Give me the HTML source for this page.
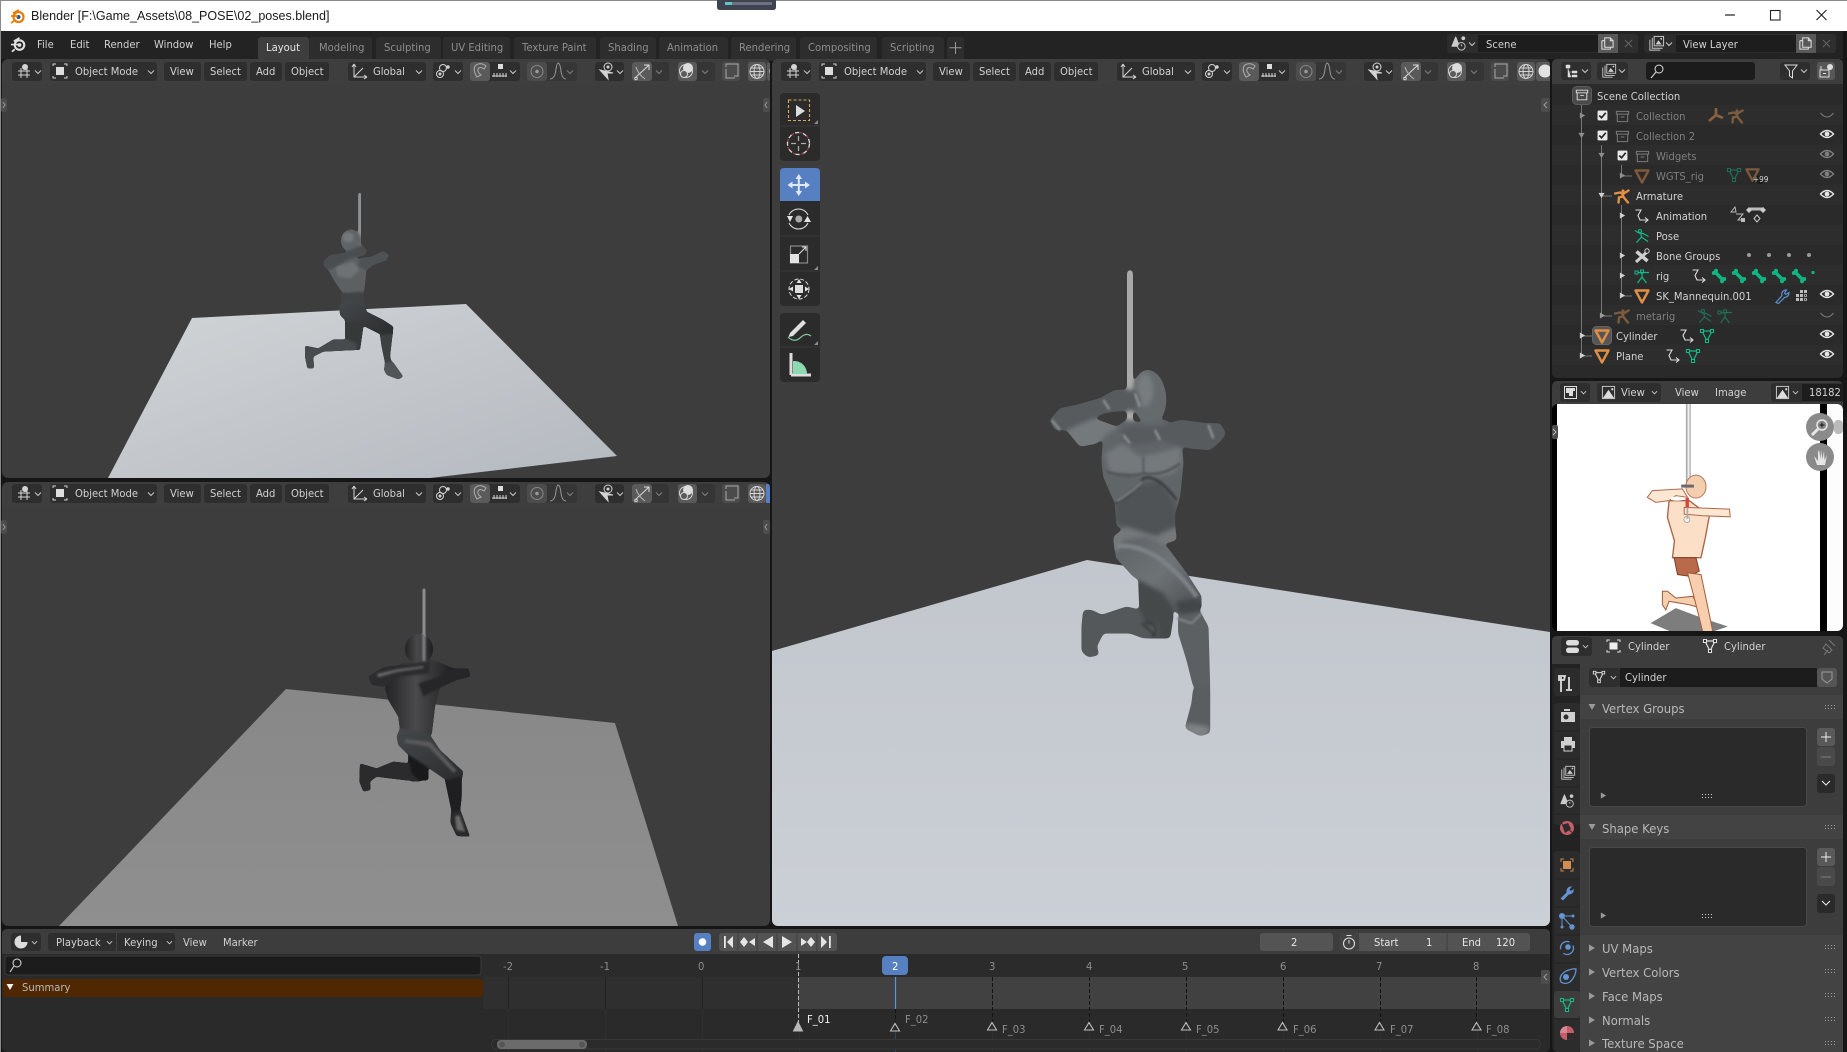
<!DOCTYPE html>
<html><head><meta charset="utf-8"><title>Blender</title>
<style>
html,body{margin:0;padding:0;width:1847px;height:1052px;overflow:hidden;background:#161616}
svg.p{position:absolute;left:0;top:0}
.t{position:absolute;white-space:nowrap;margin-top:1px;font:11px/14px "DejaVu Sans","Liberation Sans",sans-serif;color:#d2d2d2;transform:scaleX(.91);transform-origin:0 50%}
.d{color:#7f7f7f}.n{color:#8e8e8e}.w{color:#e6e6e6}.o{color:#b9b9b9}
.h{font-size:12px;transform:scaleX(.97)}
</style></head><body>
<svg class="p" width="1847" height="1052" viewBox="0 0 1847 1052">
<defs>
<linearGradient id="pl1" x1="0" y1="0" x2="1" y2="1"><stop offset="0" stop-color="#d2d5d7"/><stop offset="1" stop-color="#b4b9c0"/></linearGradient>
<linearGradient id="pl2" x1="0" y1="0" x2="0" y2="1"><stop offset="0" stop-color="#888"/><stop offset="1" stop-color="#8f8f8f"/></linearGradient>
<linearGradient id="pl3" x1="0" y1="0" x2="0" y2="1"><stop offset="0" stop-color="#c2c6cd"/><stop offset="1" stop-color="#cbcfd6"/></linearGradient>
<linearGradient id="g1" x1="0" y1="0" x2="1" y2="1"><stop offset="0" stop-color="#6d7275"/><stop offset="1" stop-color="#45484a"/></linearGradient>
<linearGradient id="g2" x1="0" y1="0" x2="1" y2="1"><stop offset="0" stop-color="#505456"/><stop offset="1" stop-color="#6a6e70"/></linearGradient>
<linearGradient id="g3" x1="0" y1="0" x2="1" y2="1"><stop offset="0" stop-color="#45484a"/><stop offset="1" stop-color="#2a2c2e"/></linearGradient>
<linearGradient id="g4" x1="0" y1="0" x2="1" y2="0"><stop offset="0" stop-color="#232325"/><stop offset=".45" stop-color="#4a4a4c"/><stop offset="1" stop-color="#1e1e20"/></linearGradient>
<linearGradient id="th" x1="0" y1="0" x2="1" y2="1"><stop offset="0" stop-color="#5d6265"/><stop offset=".5" stop-color="#6e7376"/><stop offset="1" stop-color="#494c4e"/></linearGradient>
<filter id="b1" x="-5%" y="-5%" width="110%" height="110%"><feGaussianBlur stdDeviation="3"/></filter>
<filter id="b3" x="-5%" y="-5%" width="110%" height="110%"><feGaussianBlur stdDeviation=".5"/></filter>
<filter id="goo1" x="-5%" y="-5%" width="110%" height="110%" color-interpolation-filters="sRGB"><feGaussianBlur stdDeviation="6"/><feComponentTransfer><feFuncA type="linear" slope="12" intercept="-5"/></feComponentTransfer><feGaussianBlur stdDeviation="1"/></filter>
<filter id="goo2" x="-5%" y="-5%" width="110%" height="110%" color-interpolation-filters="sRGB"><feGaussianBlur stdDeviation="2.800"/><feComponentTransfer><feFuncA type="linear" slope="12" intercept="-5"/></feComponentTransfer><feGaussianBlur stdDeviation=".8"/></filter>
<clipPath id="c1"><rect x="2" y="59" width="768" height="419" rx="6"/></clipPath>
<clipPath id="c2"><rect x="2" y="482" width="768" height="444" rx="6"/></clipPath>
<clipPath id="c3"><rect x="772" y="59" width="778" height="867" rx="6"/></clipPath>
<clipPath id="c4"><rect x="1552" y="404" width="291" height="227" rx="6"/></clipPath>

<symbol id="mesh" viewBox="0 0 16 16"><path d="M1.500 2.500H14.500L8 14.500Z" fill="none" stroke="currentColor" stroke-width="2.400" stroke-linejoin="round"/></symbol>
<symbol id="tri" viewBox="0 0 16 16"><path d="M3 3H13L8 13Z" fill="none" stroke="currentColor" stroke-width="1.200"/><path d="M1.500 1.500h3v3h-3zM11.500 1.500h3v3h-3zM6.500 11.500h3v3h-3z" fill="#222" stroke="currentColor" stroke-width="1.100"/></symbol>
<symbol id="arm" viewBox="0 0 16 16"><circle cx="9" cy="3" r="1.600" fill="currentColor"/><path d="M1 5.500 6 4.500 9 6 14.500 2.500M8.500 6 9.500 9 14 14.500M8.800 8.500 5 9.500 4.500 14.500" fill="none" stroke="currentColor" stroke-width="2.400" stroke-linecap="round"/></symbol>
<symbol id="pose" viewBox="0 0 16 16"><circle cx="6" cy="3" r="1.500" fill="none" stroke="currentColor"/><path d="M1 2.500 5 5 9 5.500 14.500 8.500M7 6 7.500 9 2.500 14.500M7.500 9 14 13.500" fill="none" stroke="currentColor" stroke-width="1.200"/></symbol>
<symbol id="rig" viewBox="0 0 16 16"><path d="M1 3h3v3H1zM6.500 2h3v3h-3z" fill="none" stroke="currentColor"/><path d="M4 4.500H15M8 5V9L3.500 15M8 9 12.500 15" fill="none" stroke="currentColor" stroke-width="1.200"/></symbol>
<symbol id="coll" viewBox="0 0 16 16"><path d="M1.500 2.500h13v3h-13zM2.500 5.500v8h11v-8M6 8.500h4" fill="none" stroke="currentColor" stroke-width="1.100"/></symbol>
<symbol id="eye" viewBox="0 0 16 16"><path d="M1.500 8Q8 1 14.500 8 8 15 1.500 8Z" fill="none" stroke="currentColor" stroke-width="1.400"/><circle cx="8" cy="8" r="2.400" fill="currentColor"/></symbol>
<symbol id="eoff" viewBox="0 0 16 16"><path d="M1.500 6Q8 14 14.500 6" fill="none" stroke="currentColor" stroke-width="1"/></symbol>
<symbol id="chk" viewBox="0 0 12 12"><rect x=".5" y=".5" width="11" height="11" rx="1.500" fill="#e8e8e8" stroke="#666" stroke-width=".6"/><path d="M2.500 6 5 8.500 9.500 3" fill="none" stroke="#222" stroke-width="1.800"/></symbol>
<symbol id="anim" viewBox="0 0 16 16"><path d="M1.500 2H7L4 7.500 6 12H14M11 9.500 14 12 11 14.500" fill="none" stroke="currentColor" stroke-width="1.100"/></symbol>
<symbol id="bone" viewBox="0 0 16 16"><path d="M3.500 3.500 12.500 12.500" stroke="currentColor" stroke-width="3.400"/><circle cx="2.800" cy="5" r="2" fill="currentColor"/><circle cx="5" cy="2.800" r="2" fill="currentColor"/><circle cx="11" cy="13.200" r="2" fill="currentColor"/><circle cx="13.200" cy="11" r="2" fill="currentColor"/></symbol>
<symbol id="bones" viewBox="0 0 16 16"><path d="M2 14 14 3" stroke="currentColor" stroke-width="3"/><path d="M2.500 3.500 13.500 13" stroke="currentColor" stroke-width="3.500"/><circle cx="13" cy="3" r="2.200" fill="#2a2a2a" stroke="currentColor"/></symbol>
<symbol id="wrench" viewBox="0 0 16 16"><path d="M2 14.500 8 7.500Q7 3.500 11 2L12.500 2 10.500 5 12 6.500 15 4.500Q15 9 10.500 9.500L4.500 15.500Z" fill="none" stroke="currentColor" stroke-width="1.200"/></symbol>
<symbol id="wrenchf" viewBox="0 0 16 16"><path d="M1.500 13.500 7.500 7.500Q7 3 11 1.500L13 1.500 10.500 4.500 11.800 6 14.800 4Q15 9 9.500 9.800L4 15.500Z" fill="currentColor"/></symbol>
<symbol id="grid" viewBox="0 0 14 14"><path d="M5 1h3v3H5zM9 1h3v3H9zM1 5h3v3H1zM5 5h3v3H5zM1 9h3v3H1zM5 9h3v3H5z" fill="#bbb"/><path d="M9.500 5.500h2v2h-2zM9.500 9.500h2v2h-2z" fill="none" stroke="#bbb" stroke-width=".8"/></symbol>
<symbol id="chev" viewBox="0 0 8 8"><path d="M1 2.500 4 5.500 7 2.500" fill="none" stroke="currentColor" stroke-width="1.100"/></symbol>
<symbol id="scene" viewBox="0 0 18 18"><path d="M5 2 9 12H1Z" fill="#ccc" stroke="#ccc" stroke-linejoin="round"/><circle cx="13" cy="3.500" r="2" fill="#ccc"/><circle cx="11" cy="12" r="4" fill="#2c2c2c" stroke="#ccc"/><path d="M11 12V10" stroke="#ccc"/></symbol>
<symbol id="layer" viewBox="0 0 18 18"><path d="M2 5V16H13M4.500 3V14H15.500" fill="none" stroke="#ccc"/><rect x="6.500" y="1.500" width="10" height="10" fill="#2c2c2c" stroke="#ccc"/><path d="M8 10 11 5.500 14.500 10Z" fill="#ccc"/><circle cx="14" cy="4" r="1" fill="#ccc"/></symbol>
<symbol id="copy" viewBox="0 0 16 16"><path d="M5 2h6l3 3v7H5zM2 5h3M2 5v9h9v-2M11 2v3h3" fill="none" stroke="#ddd" stroke-width="1.100"/></symbol>
<symbol id="x" viewBox="0 0 10 10"><path d="M1 1 9 9M9 1 1 9" stroke="currentColor" stroke-width="1"/></symbol>
<symbol id="img" viewBox="0 0 16 16"><rect x="1.500" y="1.500" width="13" height="13" fill="none" stroke="#ccc"/><path d="M2 14 8 5 14 14Z" fill="#ddd"/><circle cx="12" cy="4.500" r="1.200" fill="#ddd"/></symbol>
<symbol id="hdr" viewBox="0 0 800 26">
<rect x="0" y="0" width="800" height="26" fill="#3e3e3e"/>
<g fill="#2e2e2e">
<rect x="12" y="3" width="30" height="19" rx="3"/><rect x="50" y="3" width="107" height="19" rx="3"/>
<rect x="164" y="3" width="37" height="19" rx="3"/><rect x="204" y="3" width="43" height="19" rx="3"/><rect x="250" y="3" width="32" height="19" rx="3"/><rect x="285" y="3" width="44" height="19" rx="3"/>
<rect x="348" y="3" width="78" height="19" rx="3"/><rect x="433" y="3" width="30" height="19" rx="3"/><rect x="470" y="3" width="50" height="19" rx="3"/>
<rect x="595" y="3" width="29" height="19" rx="3"/></g>
<rect x="527" y="3" width="50" height="19" rx="3" fill="#363636"/>
<rect x="632" y="3" width="37" height="19" rx="3" fill="#353535"/>
<rect x="678" y="3" width="37" height="19" rx="3" fill="#353535"/>
<rect x="470" y="3" width="20" height="19" rx="3" fill="#5a5a5a"/>
<rect x="527" y="3" width="20" height="19" rx="3" fill="#4c4c4c"/>
<rect x="632" y="3" width="20" height="19" rx="3" fill="#5a5a5a"/>
<rect x="678" y="3" width="19" height="19" rx="3" fill="#5a5a5a"/>
<rect x="722" y="3" width="18" height="19" rx="3" fill="#4b4b4b"/>
<rect x="748" y="3" width="18" height="19" rx="3" fill="#5a5a5a"/><rect x="767" y="3" width="33" height="19" rx="3" fill="#5a5a5a"/>
<circle cx="776" cy="12" r="6.500" fill="#e2e2e2"/>
<g fill="none" stroke="#d4d4d4" stroke-width="1">
<path d="M18 12H30M18 16H30M21 9V19M27 9V19"/><circle cx="25" cy="8" r="3" fill="#d4d4d4" stroke="none"/>
<path d="M53 7V5h3M64 5h3V7M53 17v2h3M64 19h3v-2"/><rect x="56" y="8" width="8" height="8" fill="#ddd" stroke="none"/>
<path d="M354 5V18H367M354 5l-2 3M354 5l2 3M367 18l-3-2M367 18l-3 2M354 18 363 9"/>
<circle cx="443" cy="9" r="3.500"/><circle cx="440" cy="15" r="3.500"/><circle cx="448" cy="8" r="1.200" fill="#d4d4d4"/><circle cx="440" cy="15" r="1" fill="#d4d4d4"/>
<path d="M477 18Q472 10 476 6 481 3 486 7L484 10Q480 7 478 10 477 13 481 16Z" stroke="#a8a8a8" stroke-width="1.100"/>
<path d="M492 17H507M494 14V18M497 14V18M500 14V18M503 14V18M506 14V18"/><rect x="498" y="5" width="5" height="5" fill="#ddd" stroke="none"/>
<circle cx="537" cy="12.500" r="6" stroke="#888"/><circle cx="537" cy="12.500" r="1.800" fill="#999" stroke="none"/>
<path d="M550 20Q555 20 556 10 557 4 558 4 560 4 561 12 562 20 566 20" stroke="#999"/>
<path d="M600 11 608 20 607 14 613 14Z" fill="#d4d4d4"/><circle cx="608" cy="8" r="4" fill="#2e2e2e"/><circle cx="608" cy="8" r="1.500" fill="#d4d4d4" stroke="none"/>
<path d="M635 19 649 6M644 6h5v5" stroke="#ddd"/><path d="M636 8Q638 15 645 20" stroke="#bbb"/><circle cx="636" cy="19.500" r="1.300"/>
<circle cx="686" cy="12" r="6.500"/><circle cx="688" cy="9" r="5" fill="#ddd" stroke="none"/><circle cx="684" cy="15" r="3.500" fill="#5a5a5a"/>
<path d="M726 8V5H738V17H734M726 10v9H735" stroke="#aaa"/>
<circle cx="757" cy="12.500" r="7"/><ellipse cx="757" cy="12.500" rx="3" ry="7"/><path d="M750 12.500H764M751 9H763M751 16H763"/>
</g>
<g color="#c4c4c4"><use href="#chev" x="34" y="9" width="8" height="8"/><use href="#chev" x="147" y="9" width="8" height="8"/><use href="#chev" x="415" y="9" width="8" height="8"/><use href="#chev" x="454" y="9" width="8" height="8"/><use href="#chev" x="509" y="9" width="8" height="8"/><use href="#chev" x="616" y="9" width="8" height="8"/></g>
<g color="#7d7d7d"><use href="#chev" x="566" y="9" width="8" height="8"/><use href="#chev" x="655" y="9" width="8" height="8"/><use href="#chev" x="701" y="9" width="8" height="8"/></g>
</symbol>
<symbol id="tr" viewBox="0 0 8 8"><path d="M1 .5 7 4 1 7.500Z" fill="currentColor"/></symbol>
<symbol id="trd" viewBox="0 0 8 8"><path d="M.5 1H7.500L4 7Z" fill="currentColor"/></symbol>
<symbol id="gripd" viewBox="0 0 10 6"><path d="M0 0h1v1H0zM3 0h1v1H3zM6 0h1v1H6zM9 0h1v1H9zM0 3h1v1H0zM3 3h1v1H3zM6 3h1v1H6zM9 3h1v1H9z" fill="currentColor"/></symbol>
</defs>

<!-- title bar -->
<rect x="0" y="0" width="1847" height="31" fill="#fff"/><rect x="0" y="0" width="1847" height="1" fill="#8a8a8a"/>
<rect x="0" y="0" width="1" height="1052" fill="#8a8a8a"/>
<path d="M717 0H776V7Q776 10 773 10H720Q717 10 717 7Z" fill="#3f4350"/>
<rect x="725" y="2" width="7" height="3" fill="#5ec7c0"/><rect x="732" y="2" width="40" height="3" fill="#6d7280"/>
<g transform="translate(11 9)"><circle cx="7.500" cy="8" r="5" fill="none" stroke="#e87d0d" stroke-width="2.200"/><circle cx="7.500" cy="8" r="2" fill="#26558e"/><path d="M0 7H7M2 4 8 1M3 12 0 14" stroke="#e87d0d" stroke-width="1.700"/></g>
<path d="M1725 15H1735" stroke="#222" stroke-width="1.200"/><rect x="1770.500" y="10.500" width="9.500" height="9.500" fill="none" stroke="#222" stroke-width="1.100"/><path d="M1816.500 10 1826.500 20M1826.500 10 1816.500 20" stroke="#222" stroke-width="1.100"/>

<!-- top bar -->
<rect x="1" y="31" width="1846" height="28" fill="#232323"/>
<g transform="translate(10 36) scale(.95)"><circle cx="10" cy="9.500" r="5" fill="none" stroke="#e0e0e0" stroke-width="2.200"/><circle cx="10" cy="9.500" r="2" fill="#e0e0e0"/><path d="M1 9H9M4 5.500 10 2M5 14 2 16.500" stroke="#e0e0e0" stroke-width="1.800"/></g>
<g fill="#2d2d2d"><rect x="309" y="37" width="63" height="24" rx="3"/><rect x="376" y="37" width="65" height="24" rx="3"/><rect x="443" y="37" width="67" height="24" rx="3"/><rect x="514" y="37" width="82" height="24" rx="3"/><rect x="600" y="37" width="56" height="24" rx="3"/><rect x="659" y="37" width="69" height="24" rx="3"/><rect x="731" y="37" width="65" height="24" rx="3"/><rect x="800" y="37" width="77" height="24" rx="3"/><rect x="882" y="37" width="62" height="24" rx="3"/><rect x="947" y="37" width="17" height="24" rx="3"/></g>
<rect x="258" y="37" width="51" height="24" rx="3" fill="#3e3e3e"/>
<path d="M955.500 42V54M949.500 47.800H961.500" stroke="#9a9a9a" stroke-width="1"/>
<rect x="1447" y="34" width="191" height="19" rx="3" fill="#2c2c2c"/><rect x="1478" y="35" width="120" height="17" fill="#1d1d1d"/><rect x="1598" y="34" width="20" height="19" fill="#585858"/><rect x="1618" y="34" width="20" height="19" rx="3" fill="#2e2e2e"/>
<rect x="1644" y="34" width="192" height="19" rx="3" fill="#2c2c2c"/><rect x="1676" y="35" width="120" height="17" fill="#1d1d1d"/><rect x="1796" y="34" width="20" height="19" fill="#585858"/><rect x="1816" y="34" width="20" height="19" rx="3" fill="#2e2e2e"/>
<use href="#scene" x="1451" y="35" width="17" height="17"/><use href="#layer" x="1648" y="35" width="17" height="17"/>
<g color="#c4c4c4"><use href="#chev" x="1468" y="40" width="8" height="8"/><use href="#chev" x="1665" y="40" width="8" height="8"/></g>
<use href="#copy" x="1600" y="36" width="15" height="15"/><use href="#copy" x="1798" y="36" width="15" height="15"/>
<g color="#6a6a6a"><use href="#x" x="1624" y="39" width="9" height="9"/><use href="#x" x="1822" y="39" width="9" height="9"/></g>

<!-- viewport top-left -->
<g clip-path="url(#c1)">
<rect x="2" y="59" width="768" height="419" fill="#3d3d3d"/>
<path d="M108 478 192 318 466 304 617 456 430 478Z" fill="url(#pl1)"/>
<use href="#hdr" x="0" y="59" width="800" height="26"/>
<g transform="translate(300 180) scale(.3333)" filter="url(#goo2)">
<rect x="175" y="38" width="8" height="160" fill="#8f9294"/>
<ellipse cx="153" cy="182" rx="30" ry="33" fill="#5f6366"/>
<ellipse cx="145" cy="172" rx="17" ry="15" fill="#74787b"/>
<polygon points="85,270 110,240 165,230 200,255 195,310 190,345 170,345 125,335 105,305" fill="#5c6063"/>
<polygon points="105,260 160,245 180,270 150,295 115,290" fill="#6e7275"/>
<polygon points="70,245 90,225 130,220 185,195 200,210 195,225 150,235 110,260 85,270 72,260" fill="#4b4e50"/>
<polygon points="180,235 215,230 250,213 267,225 260,240 220,255 200,270 175,260" fill="#4f5254"/>
<polygon points="122,340 190,335 192,372 125,368" fill="#414446"/>
<polygon points="135,420 190,440 180,510 150,510 135,470" fill="#36383a"/>
<polygon points="15,497 55,505 100,478 140,478 170,490 170,510 130,512 70,515 40,530 42,565 22,565 15,530" fill="#484b4d"/>
<polygon points="118,372 150,365 195,375 200,395 250,420 280,440 278,465 245,465 195,440 140,425 120,405" fill="url(#g3)"/>
<polygon points="240,465 278,460 270,530 275,545 255,548 245,500" fill="#3e4042"/>
<polygon points="255,548 278,545 310,590 295,598 260,585 252,570" fill="#525557"/>
</g>
</g>

<!-- viewport bottom-left -->
<g clip-path="url(#c2)">
<rect x="2" y="482" width="768" height="444" fill="#3d3d3d"/>
<path d="M59 926 286 689 615 723 678 926Z" fill="url(#pl2)"/>
<use href="#hdr" x="0" y="481" width="800" height="26"/>
<rect x="766" y="484" width="4" height="19" fill="#5680c2"/>
<g transform="translate(340 580) scale(.3333)" filter="url(#goo2)">
<rect x="248" y="25" width="8" height="330" fill="#8d8d8d"/>
<ellipse cx="237" cy="207" rx="42" ry="45" fill="url(#g4)"/><rect x="248" y="25" width="8" height="220" fill="#8d8d8d"/>
<polygon points="135,325 185,250 280,240 340,265 300,320 285,380 275,465 180,450 175,410 145,360" fill="url(#g4)"/>
<polygon points="85,290 130,262 200,252 270,245 268,280 225,285 180,290 130,320 95,315" fill="#2c2c2e"/>
<polygon points="110,282 170,268 250,258 250,264 170,276 115,292" fill="#666668"/>
<polygon points="235,310 300,290 340,265 385,265 392,290 350,300 295,325 250,350" fill="#262628"/>
<polygon points="205,520 265,560 265,600 215,605 205,560" fill="#19191b"/>
<polygon points="60,550 110,565 160,545 210,550 215,580 240,605 190,600 110,590 90,605 92,630 70,635 58,605" fill="#2b2b2d"/>
<polygon points="170,470 180,445 270,465 300,510 370,575 365,600 325,605 260,560 200,520 175,495" fill="url(#g3)"/>
<polygon points="195,478 270,485 350,572 340,578 265,500 195,488" fill="#5a5a5c"/>
<polygon points="315,600 365,590 365,650 360,695 335,695" fill="#1f1f21"/>
<polygon points="333,695 362,693 390,770 350,768 332,730" fill="#2a2a2c"/>
<polygon points="345,710 358,705 375,755 350,750" fill="#6a6a6a"/>
</g>
</g>

<!-- viewport right -->
<g clip-path="url(#c3)">
<rect x="772" y="59" width="778" height="867" fill="#3d3d3d"/>
<path d="M772 651 1087 560 1550 632V926H772Z" fill="url(#pl3)"/>
<use href="#hdr" x="769" y="59" width="800" height="26"/>
<g transform="translate(1000 340) scale(.3333)" filter="url(#goo1)">
<rect x="382" y="-210" width="16" height="555" fill="#a9a9a9"/>
<ellipse cx="448" cy="172" rx="50" ry="82" fill="#656a6d" transform="rotate(-5 448 172)"/>
<ellipse cx="435" cy="150" rx="25" ry="50" fill="#777c7f"/>
<rect x="382" y="-210" width="16" height="360" fill="#a9a9a9"/>
<polygon points="415,720 510,770 520,830 510,895 440,895 420,840" fill="#46494a"/>
<polygon points="250,810 275,810 305,825 380,800 420,810 440,860 470,850 480,890 430,895 390,880 310,880 290,920 298,945 265,952 245,935 245,860" fill="#55585a"/>
<polygon points="310,290 380,240 430,250 500,240 545,310 550,370 540,470 525,520 525,565 470,590 350,560 345,490 310,410 305,360" fill="#606568"/>
<polygon points="315,340 370,310 420,350 470,340 540,320 545,370 520,400 470,410 430,405 380,400 330,400" fill="#74797c"/>
<polygon points="350,490 420,430 480,425 525,490 525,560 470,585 400,570 350,550" fill="#4f5355"/>
<polygon points="150,240 180,205 230,195 300,175 345,150 410,150 422,180 405,210 340,215 310,220 270,240 250,250 205,270 165,270" fill="#575b5e"/>
<polygon points="200,270 280,235 355,262 325,280 290,310 240,320" fill="#74797c"/>
<polygon points="365,265 410,258 470,262 540,240 620,250 660,250 678,280 660,305 630,330 570,325 480,300 440,310 395,315 370,300" fill="#575b5e"/>
<polygon points="340,590 380,560 470,590 525,560 530,600 480,615 400,592 345,640" fill="#74787a"/>
<polygon points="345,650 370,600 440,590 500,620 560,700 605,770 600,810 530,820 490,760 400,710" fill="url(#th)"/>
<polygon points="525,785 590,775 607,795 590,825 540,820" fill="#434648"/>
<polygon points="535,825 600,815 625,860 630,1040 580,1040 560,960 535,880" fill="#5c6062"/>
<polygon points="580,1045 630,1040 630,1180 600,1188 555,1165 575,1090" fill="#5a5e60"/>
<polygon points="565,1150 625,1160 625,1180 600,1188 555,1165" fill="#7f8284"/>
</g>
<g transform="translate(1000 340) scale(.3333)" filter="url(#b1)" fill="none">
<path d="M345 490Q400 465 430 415 470 400 530 480" stroke="#35383a" stroke-width="7"/>
<path d="M350 484Q400 455 425 425" stroke="#878a8c" stroke-width="5"/>
<path d="M320 395Q380 415 430 400 490 410 540 370" stroke="#4d5153" stroke-width="7"/>
<path d="M430 350V400" stroke="#505456" stroke-width="5"/>
<path d="M310 180l18 28M465 270l15 30M625 255l15 40M155 240l25 30M405 160l14 40M370 285l20 25" stroke="#999c9e" stroke-width="6"/>
<path d="M425 850 470 890M435 850a22 22 0 1 1 20 40" stroke="#3a3c3e" stroke-width="6"/>
<path d="M530 835 575 850 605 820" stroke="#8a8d8f" stroke-width="5"/>
<path d="M350 620Q400 610 470 650 540 700 590 770" stroke="#7c8184" stroke-width="14"/>
</g>
</g>
<!-- tool shelf -->
<rect x="780" y="93" width="40" height="68" rx="4" fill="#2b2b2b"/><rect x="780" y="168" width="40" height="138" rx="4" fill="#2b2b2b"/><rect x="780" y="313" width="40" height="69" rx="4" fill="#2b2b2b"/>
<path d="M780 126H820M780 236H820M780 271H820M780 347H820" stroke="#3a3a3a"/>
<path d="M780 201V172Q780 168 784 168H816Q820 168 820 172V201Z" fill="#5680c2"/>
<rect x="788.500" y="100" width="21" height="20.500" fill="none" stroke="#d8a95a" stroke-width="1.100" stroke-dasharray="3 2"/><path d="M796 105V117L805 111Z" fill="#dcdcdc"/>
<circle cx="798.500" cy="143.500" r="11" fill="none" stroke="#ddd" stroke-width="1.300" stroke-dasharray="5 3"/><circle cx="798.500" cy="143.500" r="11" fill="none" stroke="#9c3a3a" stroke-width="1.300" stroke-dasharray="3 5" stroke-dashoffset="4"/><path d="M798.500 136V141M798.500 146V151M791 143.500H796M801 143.500H806" stroke="#aaa" stroke-width="1.300"/>
<g fill="#e0e6f2"><path d="M798.800 174 802 179H795.500ZM798.800 196 802 191H795.500ZM787.500 185 792.500 181.500V188.500ZM810 185 805 181.500V188.500Z"/><rect x="797.800" y="179" width="2" height="12"/><rect x="792" y="184" width="14" height="2"/></g>
<path d="M789 215A10.500 10.500 0 0 1 808 215M808 223A10.500 10.500 0 0 1 789 223" fill="none" stroke="#ddd" stroke-width="1"/><circle cx="798.800" cy="219" r="3.500" fill="#aaa"/><path d="M787 216H793L790 222ZM804 222H811L807.500 216Z" fill="#e4e4e4"/>
<rect x="790.500" y="246" width="17" height="17" fill="none" stroke="#888" stroke-width="1.200"/><rect x="790" y="254" width="9" height="9" fill="#e2e2e2"/><path d="M799 254 806 247M802 247H806V251" stroke="#e2e2e2" fill="none"/>
<circle cx="799" cy="289" r="10" fill="none" stroke="#ddd" stroke-width="1" stroke-dasharray="4 2"/><rect x="795" y="285" width="8" height="8" fill="#ddd"/><path d="M799 279 796.500 283H801.500ZM799 299 796.500 295H801.500ZM789 289 793 286.500V291.500ZM809 289 805 286.500V291.500Z" fill="#e4e4e4"/>
<path d="M790 333 803 320 806 323 793 336 788.500 337Z" fill="#e0e0e0"/><path d="M788 337Q794 343 800 338 806 332 811 336" fill="none" stroke="#7fc8a4" stroke-width="1.200"/>
<path d="M791 353V375" stroke="#ddd" stroke-width="3"/><path d="M791 375H811" stroke="#ddd" stroke-width="3"/><path d="M793 361A13 13 0 0 1 807 374H793Z" fill="#8ed9b1"/>
<g fill="#8d8d8d"><path d="M818 120l-4 4h4zM818 266l-4 4h4zM818 341l-4 4h4z"/></g>

<!-- side tabs small arrows -->
<g fill="#4c4c4c"><rect x="1" y="98" width="6" height="14" rx="2"/><rect x="763" y="98" width="7" height="14" rx="2"/><rect x="1" y="520" width="6" height="14" rx="2"/><rect x="763" y="520" width="7" height="14" rx="2"/><rect x="1541" y="98" width="9" height="14" rx="2"/></g>
<g stroke="#9c9c9c" fill="none"><path d="M3 102 5 105 3 108M767 102 765 105 767 108M3 524 5 527 3 530M767 524 765 527 767 530M1547 102 1544 105 1547 108"/></g>

<!-- timeline -->
<rect x="2" y="929" width="1548" height="123" rx="5" fill="#2a2a2a"/>
<path d="M2 954V934Q2 929 7 929H1545Q1550 929 1550 934V954Z" fill="#3d3d3d"/>
<rect x="11" y="933" width="30" height="18" rx="3" fill="#2e2e2e"/><rect x="48" y="933" width="127" height="18" rx="3" fill="#2e2e2e"/><path d="M116.500 933V951" stroke="#444"/>
<circle cx="21" cy="942" r="6.500" fill="#ddd"/><path d="M21 942V935A7 7 0 0 1 28 942Z" fill="#2e2e2e"/>
<g color="#c4c4c4"><use href="#chev" x="31" y="939" width="7" height="7"/><use href="#chev" x="106" y="939" width="7" height="7"/><use href="#chev" x="166" y="939" width="7" height="7"/></g>
<rect x="694" y="933" width="17" height="18" rx="3" fill="#5680c2"/><circle cx="702.500" cy="942" r="3.800" fill="#fff"/>
<rect x="719" y="933" width="118" height="18" rx="3" fill="#535353"/>
<path d="M738 933V951M757 933V951M777 933V951M797 933V951M817 933V951" stroke="#3f3f3f"/>
<g fill="#e6e6e6"><rect x="724" y="936" width="1.800" height="12"/><path d="M733 936V948L727 942ZM744 937 740 942 744 947 748 942ZM755 938 749 942 755 946ZM773 936V948L763 942ZM782 936V948L792 942ZM801 938 807 942 801 946ZM811 937 807 942 811 947 815 942ZM821 936 827 942 821 948Z"/><rect x="829" y="936" width="1.800" height="12"/></g>
<rect x="1260" y="933" width="73" height="18" rx="3" fill="#545454"/>
<rect x="1340" y="933" width="190" height="18" rx="3" fill="#535353"/><path d="M1358.500 933V951M1447 933V951" stroke="#3f3f3f"/><rect x="1340" y="933" width="18" height="18" rx="3" fill="#424242"/>
<circle cx="1349" cy="943.500" r="5.500" fill="none" stroke="#ddd" stroke-width="1.100"/><path d="M1349 943.500V940M1346.500 935.500H1351.500" stroke="#ddd"/>
<rect x="5" y="956" width="476" height="19" rx="3" fill="#1c1c1c" stroke="#3a3a3a"/>
<circle cx="17" cy="963" r="4" fill="none" stroke="#ddd"/><path d="M14 966 10 972" stroke="#ddd"/>
<rect x="3" y="979" width="480" height="18" rx="3" fill="#4f2800"/><use href="#trd" x="6" y="983" width="8" height="8" color="#f2f2f2"/>
<rect x="483" y="977" width="1067" height="32" fill="#2f2f2f"/><rect x="798" y="977" width="752" height="32" fill="#414141"/>
<g stroke="#222" stroke-width="1"><path d="M508.500 977V1009M605.500 977V1009M702.500 977V1009"/></g>
<g stroke="#2f2f2f"><path d="M508.500 1009V1052M605.500 1009V1052M702.500 1009V1052M799.500 1009V1052M992.500 1009V1052M1089.500 1009V1052M1186.500 1009V1052M1283.500 1009V1052M1380.500 1009V1052M1477.500 1009V1052"/></g>
<rect x="483" y="954" width="1067" height="23" fill="#2b2b2b"/>
<path d="M798.500 954V1022" stroke="#bbb" stroke-dasharray="4 2"/>
<g stroke="#141414" stroke-dasharray="4 2"><path d="M992.500 977V1022M1089.500 977V1022M1186.500 977V1022M1283.500 977V1022M1380.500 977V1022M1476.500 977V1022M895.500 1009V1022"/></g>
<path d="M895.500 977V1009" stroke="#5c93e0" stroke-width="1.200"/><path d="M895.500 1030V1052" stroke="#2f4260"/>
<rect x="882" y="956" width="26" height="19" rx="4" fill="#5680c2"/>
<path d="M793.500 1031 798 1022 802.500 1031Z" fill="#b8b8b8" stroke="#b8b8b8"/>
<g fill="none" stroke="#bdbdbd" stroke-width="1.100"><path d="M890.500 1031 895 1023.500 899.500 1031ZM987.500 1030 992 1022.500 996.500 1030ZM1084.500 1030 1089 1022.500 1093.500 1030ZM1181.500 1030 1186 1022.500 1190.500 1030ZM1278 1030 1282.500 1022.500 1287 1030ZM1375 1030 1379.500 1022.500 1384 1030ZM1472 1030 1476.500 1022.500 1481 1030Z"/></g>
<rect x="491.500" y="1039.500" width="1049" height="9.500" rx="4.500" fill="#2b2b2b" stroke="#383838"/><rect x="497" y="1040" width="90" height="9" rx="4" fill="#6b6b6b"/><circle cx="502" cy="1044.500" r="3" fill="#555"/><circle cx="582" cy="1044.500" r="3" fill="#555"/>
<rect x="1541" y="970" width="9" height="14" rx="2" fill="#4c4c4c"/><path d="M1547 974 1544 977 1547 980" stroke="#9c9c9c" fill="none"/>

<!-- outliner -->
<rect x="1552" y="59" width="291" height="319" rx="5" fill="#2a2a2a"/>
<path d="M1552 84V64Q1552 59 1557 59H1838Q1843 59 1843 64V84Z" fill="#3d3d3d"/>
<g fill="#2d2d2d"><rect x="1552" y="105" width="291" height="20"/><rect x="1552" y="145" width="291" height="20"/><rect x="1552" y="185" width="291" height="20"/><rect x="1552" y="225" width="291" height="20"/><rect x="1552" y="265" width="291" height="20"/><rect x="1552" y="305" width="291" height="20"/><rect x="1552" y="345" width="291" height="20"/></g>
<rect x="1561" y="62" width="30" height="18" rx="3" fill="#2e2e2e"/><rect x="1597" y="62" width="31" height="18" rx="3" fill="#2e2e2e"/><rect x="1646" y="62" width="109" height="18" rx="3" fill="#1c1c1c"/><rect x="1780" y="62" width="30" height="18" rx="3" fill="#2e2e2e"/><rect x="1817" y="62" width="18" height="18" rx="3" fill="#575757"/>
<path d="M1566 65h4v3h-4zM1568 68v9h3M1568 72h3M1572 71h5v2h-5zM1572 75h5v2h-5z" fill="#ddd" stroke="#ddd" stroke-width=".5"/>
<use href="#layer" x="1601" y="63" width="16" height="16"/>
<circle cx="1659" cy="69" r="4" fill="none" stroke="#ddd"/><path d="M1656 72 1651 78" stroke="#ddd"/>
<path d="M1785 65H1797L1792.500 71V78L1789.500 76V71Z" fill="none" stroke="#ddd"/>
<path d="M1820 70h9v7h-9zM1821 66v4h4M1823 73.500h3" fill="none" stroke="#ddd"/><circle cx="1830" cy="67" r="3" fill="#ddd"/>
<g color="#c4c4c4"><use href="#chev" x="1581" y="67" width="8" height="8"/><use href="#chev" x="1618" y="67" width="8" height="8"/><use href="#chev" x="1800" y="67" width="8" height="8"/></g>
<g stroke="#777" fill="none"><path d="M1581.500 105V356H1592M1601.500 145V316H1612M1621.500 165V176H1632M1621.500 205V296H1632M1581.500 336H1592M1601.500 196H1612"/></g>
<rect x="1572.500" y="86.500" width="19" height="18" rx="4" fill="#4a4a4a" stroke="#5c5c5c"/>
<g color="#dddddd"><use href="#coll" x="1575" y="88" width="14" height="14"/></g>
<g color="#7a7a7a"><use href="#coll" x="1615" y="109" width="15" height="15"/><use href="#coll" x="1615" y="129" width="15" height="15"/><use href="#coll" x="1635" y="149" width="15" height="15"/></g>
<use href="#chk" x="1597" y="110" width="11" height="11"/><use href="#chk" x="1597" y="130" width="11" height="11"/><use href="#chk" x="1617" y="150" width="11" height="11"/>
<g color="#8d8d8d"><use href="#tr" x="1579" y="112" width="7" height="7"/><use href="#trd" x="1578" y="132" width="7" height="7"/><use href="#trd" x="1598" y="152" width="7" height="7"/><use href="#tr" x="1619" y="172" width="7" height="7"/></g>
<g color="#cfcfcf"><use href="#trd" x="1598" y="192" width="7" height="7"/><use href="#tr" x="1619" y="212" width="7" height="7"/><use href="#tr" x="1619" y="252" width="7" height="7"/><use href="#tr" x="1619" y="272" width="7" height="7"/><use href="#tr" x="1619" y="292" width="7" height="7"/><use href="#tr" x="1579" y="332" width="7" height="7"/><use href="#tr" x="1579" y="352" width="7" height="7"/></g>
<use href="#tr" x="1599" y="312" width="7" height="7" color="#999"/>
<rect x="1592.500" y="326.500" width="19" height="18" rx="4" fill="#565656" stroke="#666"/>
<g color="#7c5a3a"><use href="#mesh" x="1634" y="168" width="16" height="16"/><use href="#mesh" x="1745" y="167" width="15" height="15"/></g>
<circle cx="1760" cy="180" r="4.500" fill="#1e1e1e"/>
<g color="#7b5c3f"><use href="#arm" x="1614" y="308" width="16" height="16"/><use href="#arm" x="1728" y="108" width="16" height="16"/></g>
<path d="M1709 121 1716 115V108M1716 115 1723 118" stroke="#8a6142" stroke-width="2.600" fill="none"/>
<g color="#e08f45"><use href="#arm" x="1614" y="188" width="16" height="16"/><use href="#mesh" x="1634" y="288" width="16" height="16"/><use href="#mesh" x="1594" y="328" width="16" height="16"/><use href="#mesh" x="1594" y="348" width="16" height="16"/></g>
<g color="#dddddd"><use href="#anim" x="1634" y="208" width="16" height="16"/><use href="#anim" x="1691" y="268" width="16" height="16"/><use href="#anim" x="1679" y="328" width="16" height="16"/><use href="#anim" x="1665" y="348" width="16" height="16"/></g>
<use href="#bones" x="1634" y="248" width="16" height="16" color="#d0d0d0"/>
<g color="#13bb8a"><use href="#pose" x="1634" y="228" width="16" height="16"/><use href="#rig" x="1634" y="268" width="16" height="16"/><use href="#tri" x="1699" y="328" width="16" height="16"/><use href="#tri" x="1685" y="348" width="16" height="16"/></g>
<g color="#1f6e58"><use href="#tri" x="1726" y="167" width="16" height="16"/><use href="#pose" x="1697" y="308" width="16" height="16"/><use href="#rig" x="1717" y="308" width="16" height="16"/></g>
<g color="#0fb583"><use href="#bone" x="1711" y="268" width="16" height="16"/><use href="#bone" x="1731" y="268" width="16" height="16"/><use href="#bone" x="1751" y="268" width="16" height="16"/><use href="#bone" x="1771" y="268" width="16" height="16"/><use href="#bone" x="1791" y="268" width="16" height="16"/></g>
<circle cx="1813" cy="272.500" r="1.600" fill="#0fb583"/>
<g fill="#9a9a9a"><circle cx="1749" cy="255" r="2"/><circle cx="1769" cy="255" r="2"/><circle cx="1789" cy="255" r="2"/><circle cx="1809" cy="255" r="2"/></g>
<path d="M1731 212 1735 207 1736 212ZM1736 214H1743L1738 220H1744" fill="none" stroke="#bbb"/><rect x="1741" y="218" width="4" height="4" fill="#bbb"/>
<path d="M1750 209H1764" stroke="#bbb" stroke-width="3"/><path d="M1749 207 1752 210 1749 213 1746 210ZM1763 207 1766 210 1763 213 1760 210Z" fill="#ccc"/><path d="M1757 215 1760 218.500 1757 222 1754 218.500Z" fill="none" stroke="#ccc"/>
<use href="#wrench" x="1774" y="288" width="16" height="16" color="#5f8fd0"/><use href="#grid" x="1795" y="289" width="14" height="14"/>
<g color="#e2e2e2"><use href="#eye" x="1819" y="126" width="16" height="16"/><use href="#eye" x="1819" y="186" width="16" height="16"/><use href="#eye" x="1819" y="286" width="16" height="16"/><use href="#eye" x="1819" y="326" width="16" height="16"/><use href="#eye" x="1819" y="346" width="16" height="16"/></g>
<g color="#7d7d7d"><use href="#eye" x="1819" y="146" width="16" height="16"/><use href="#eye" x="1819" y="166" width="16" height="16"/><use href="#eoff" x="1819" y="107" width="16" height="16"/><use href="#eoff" x="1819" y="307" width="16" height="16"/></g>

<!-- image editor -->
<rect x="1552" y="381" width="291" height="30" rx="5" fill="#3d3d3d"/>
<rect x="1560" y="383" width="30" height="19" rx="3" fill="#2e2e2e"/><rect x="1597" y="383" width="64" height="19" rx="3" fill="#2e2e2e"/><rect x="1771" y="383" width="72" height="19" rx="3" fill="#2e2e2e"/><rect x="1802" y="384" width="41" height="17" fill="#1d1d1d"/>
<rect x="1564.500" y="386.500" width="12" height="12" fill="none" stroke="#ddd"/><path d="M1566 388h9v3h-2v5h-4v-3h-3z" fill="#ddd"/>
<use href="#img" x="1601" y="385" width="15" height="15"/><use href="#img" x="1775" y="385" width="15" height="15"/>
<g color="#c4c4c4"><use href="#chev" x="1580" y="389" width="7" height="7"/><use href="#chev" x="1651" y="389" width="7" height="7"/><use href="#chev" x="1792" y="389" width="7" height="7"/></g>
<g clip-path="url(#c4)">
<rect x="1552" y="404" width="291" height="227" fill="#000"/>
<rect x="1557" y="404" width="263" height="227" fill="#fff"/><rect x="1827" y="404" width="16" height="227" fill="#fdfdfd"/>
<g transform="translate(1555 400) scale(.3356)" filter="url(#b3)">
<polygon points="285,665 360,620 440,650 515,675 470,690 350,692" fill="#7d7d7d"/>
<rect x="390" y="12" width="5" height="250" fill="#aaa"/><rect x="400" y="12" width="5" height="250" fill="#bbb"/><rect x="395" y="12" width="5" height="250" fill="#eee"/>
<ellipse cx="420" cy="258" rx="30" ry="34" fill="#f3cfb0" stroke="#b9785a" stroke-width="3"/>
<polygon points="340,300 400,300 460,345 448,410 435,470 350,470 356,420 335,350" fill="#fbdfc6" stroke="#a66648" stroke-width="4"/>
<polygon points="275,290 290,270 380,265 395,290 360,285 340,300 300,305" fill="#fde6d2" stroke="#b06a4a" stroke-width="3"/>
<ellipse cx="364" cy="294" rx="20" ry="6" fill="#fff"/>
<polygon points="385,320 520,325 522,348 440,345 385,340" fill="#fde6d2" stroke="#b06a4a" stroke-width="3"/>
<rect x="389" y="292" width="10" height="30" fill="#d9423a"/><circle cx="393" cy="356" r="9" fill="#eee" stroke="#999" stroke-width="2"/><rect x="392" y="320" width="5" height="34" fill="#aaa"/><rect x="376" y="252" width="38" height="9" fill="#6b6b6b"/>
<polygon points="320,570 335,570 360,590 410,585 435,620 400,610 340,600 330,625 320,610" fill="#f5cfae" stroke="#9e5e40" stroke-width="3"/>
<polygon points="355,470 420,470 430,510 400,525 365,520" fill="#b86a4c" stroke="#7f4029" stroke-width="3"/>
<polygon points="395,515 435,520 460,640 470,690 440,690 415,590" fill="#f7cfae" stroke="#9e5e40" stroke-width="3"/>
</g>
<circle cx="1820" cy="427" r="14" fill="#8a8a8a"/><circle cx="1820" cy="457" r="14" fill="#8a8a8a"/>
<circle cx="1822" cy="425" r="5" fill="none" stroke="#e6e6e6" stroke-width="1.500"/><path d="M1818 429 1812 435" stroke="#e6e6e6" stroke-width="3"/><path d="M1819.500 425H1824.500M1822 422.500V427.500" stroke="#111"/>
<path d="M1814 456 1818 461V452L1819 450 1820.500 459 1821 450 1822.500 459 1824 451 1824.500 460 1827 455 1825 465H1817Z" fill="#e6e6e6"/>
<rect x="1834" y="420" width="9" height="14" rx="4" fill="#bbb"/>
<rect x="1552" y="425" width="6" height="14" rx="2" fill="#4c4c4c"/><path d="M1553 429 1556 432 1553 435" stroke="#bbb" fill="none"/>
</g>

<!-- properties -->
<rect x="1552" y="636" width="291" height="416" rx="5" fill="#232323"/>
<path d="M1552 664V641Q1552 636 1557 636H1838Q1843 636 1843 641V664Z" fill="#3d3d3d"/>
<rect x="1561" y="637" width="31" height="19" rx="3" fill="#2e2e2e"/>
<rect x="1566" y="640" width="13" height="5.500" rx="2.700" fill="#ddd"/><rect x="1566" y="647.500" width="13" height="5.500" rx="2.700" fill="#ddd"/>
<use href="#chev" x="1582" y="643" width="7" height="7" color="#c4c4c4"/>
<path d="M1607 642V640h3M1617 640h3v2M1607 650v2h3M1617 652h3v-2" stroke="#ddd" fill="none"/><rect x="1609.500" y="642.500" width="8" height="7" fill="#eee"/>
<use href="#tri" x="1702" y="638" width="16" height="16" color="#e2e2e2"/>
<path d="M1824 655 1828 650M1826 644 1832 650 1829 653 1823 648Z" fill="none" stroke="#7a7a7a"/><path d="M1829 640 1835 646" stroke="#7a7a7a"/>
<rect x="1580" y="664" width="263" height="388" fill="#3d3d3d"/>
<rect x="1589" y="668" width="31" height="19" rx="3" fill="#2e2e2e"/><rect x="1620" y="668" width="197" height="19" fill="#1c1c1c"/><rect x="1817" y="668" width="20" height="19" rx="3" fill="#555"/>
<use href="#tri" x="1592" y="670" width="14" height="14" color="#ddd"/><use href="#chev" x="1610" y="674" width="7" height="7" color="#c4c4c4"/>
<path d="M1822 672H1832V679L1827 683 1822 679Z" fill="none" stroke="#9a9a9a"/>
<g fill="#434343"><rect x="1580" y="695" width="263" height="24"/><rect x="1580" y="815" width="263" height="24"/><rect x="1580" y="935" width="263" height="117"/></g>
<g fill="#2a2a2a" stroke="#484848"><rect x="1589.500" y="727.500" width="217" height="79" rx="3"/><rect x="1589.500" y="847.500" width="217" height="79" rx="3"/></g>
<g fill="#595959"><rect x="1817" y="728" width="18" height="18" rx="3"/><rect x="1817" y="848" width="18" height="18" rx="3"/></g>
<g fill="#4a4a4a"><rect x="1817" y="747" width="18" height="19" rx="3"/><rect x="1817" y="867" width="18" height="19" rx="3"/></g>
<g fill="#2a2a2a"><rect x="1817" y="774" width="18" height="19" rx="3"/><rect x="1817" y="894" width="18" height="19" rx="3"/></g>
<g stroke="#eee" fill="none"><path d="M1826 732V742M1821 737H1831M1826 852V862M1821 857H1831"/><path d="M1821 757H1831M1821 877H1831" stroke="#7f7f7f"/><path d="M1822 781 1826 785 1830 781M1822 901 1826 905 1830 901"/></g>
<g color="#9a9a9a"><use href="#trd" x="1588" y="703" width="8" height="8"/><use href="#trd" x="1588" y="823" width="8" height="8"/><use href="#tr" x="1588" y="944" width="8" height="8"/><use href="#tr" x="1588" y="968" width="8" height="8"/><use href="#tr" x="1588" y="992" width="8" height="8"/><use href="#tr" x="1588" y="1016" width="8" height="8"/><use href="#tr" x="1588" y="1039" width="8" height="8"/>
<use href="#tr" x="1600" y="792" width="7" height="7"/><use href="#tr" x="1600" y="912" width="7" height="7"/></g>
<g color="#a0a0a0"><use href="#gripd" x="1825" y="705" width="10" height="6"/><use href="#gripd" x="1825" y="825" width="10" height="6"/><use href="#gripd" x="1825" y="945" width="10" height="6"/><use href="#gripd" x="1825" y="969" width="10" height="6"/><use href="#gripd" x="1825" y="993" width="10" height="6"/><use href="#gripd" x="1825" y="1017" width="10" height="6"/><use href="#gripd" x="1825" y="1041" width="10" height="6"/></g>
<g color="#cfcfcf"><use href="#gripd" x="1702" y="794" width="10" height="6"/><use href="#gripd" x="1702" y="914" width="10" height="6"/></g>
<rect x="1554" y="668" width="26" height="28" rx="3" fill="#2c2c2c"/><rect x="1554" y="703" width="26" height="122" rx="3" fill="#2c2c2c"/><rect x="1554" y="851" width="26" height="201" rx="3" fill="#2c2c2c"/>
<rect x="1554" y="991" width="26" height="27" rx="3" fill="#3d3d3d"/>
<path d="M1554 731H1580M1554 759H1580M1554 787H1580M1554 814H1580M1554 879H1580M1554 907H1580M1554 935H1580M1554 963H1580M1554 1019H1580" stroke="#222"/>
<path d="M1561 677V692M1559 680h5l1-4h-6zM1569 677V690M1566 690h6" stroke="#ddd" stroke-width="1.800" fill="none"/>
<path d="M1561 712h14v10h-14z" fill="#d0d0d0"/><circle cx="1566" cy="717" r="2.500" fill="#2c2c2c"/><path d="M1564 710h6" stroke="#d0d0d0" stroke-width="2"/>
<path d="M1561 741h14v7h-14zM1564 741v-4h8v4" fill="#d0d0d0"/><path d="M1564 745h8v6h-8z" fill="#2c2c2c" stroke="#d0d0d0"/>
<use href="#layer" x="1560" y="765" width="16" height="16"/><use href="#scene" x="1560" y="793" width="16" height="16"/>
<circle cx="1567" cy="828" r="7" fill="#c85d6a"/><path d="M1562 825 1568 823 1571 829 1565 833Z" fill="#2c2c2c"/><path d="M1560 822 1574 834" stroke="#2c2c2c"/>
<path d="M1561 862v-3h3M1570 859h3v3M1561 868v3h3M1570 871h3v-3" stroke="#c58a50" fill="none"/><rect x="1563" y="861" width="8" height="8" fill="#d48c50"/>
<use href="#wrenchf" x="1559" y="885" width="16" height="16" color="#6394d4"/>
<g stroke="#6394d4" fill="#6394d4"><circle cx="1562" cy="916" r="2.500"/><circle cx="1572" cy="927" r="2.200"/><circle cx="1562" cy="927" r="1"/><circle cx="1573" cy="916" r="1"/><path d="M1562 916 1572 927M1562 916H1573M1562 916V927" fill="none"/></g>
<circle cx="1567" cy="948" r="6.500" fill="none" stroke="#6394d4" stroke-width="1.300" stroke-dasharray="14 5"/><circle cx="1568" cy="947" r="2.800" fill="#6394d4"/>
<g fill="none" stroke="#6394d4" stroke-width="1.300"><path d="M1561 982Q1558 976 1566 971 1574 968 1576 969 1576 976 1570 982 1565 985 1561 982Z"/><circle cx="1566" cy="977" r="3" fill="#6394d4" stroke="none"/></g>
<use href="#tri" x="1559" y="997" width="16" height="16" color="#13bb8a"/>
<circle cx="1567" cy="1033" r="7" fill="#c85d6a"/><path d="M1567 1033H1574A7 7 0 0 1 1567 1040Z" fill="#2c2c2c"/><path d="M1567 1026V1033H1560A7 7 0 0 1 1567 1026Z" fill="#f0d8d8" fill-opacity=".35"/>
<rect x="1843" y="31" width="4" height="1021" fill="#161616"/>
</svg>

<!-- title -->
<div class="t" style="left:31px;top:7px;font:13px/16px 'Liberation Sans',sans-serif;color:#1a1a1a;transform:scaleX(.965)">Blender [F:\Game_Assets\08_POSE\02_poses.blend]</div>
<!-- menu -->
<div class="t" style="left:37px;top:37px">File</div><div class="t" style="left:70px;top:37px">Edit</div><div class="t" style="left:104px;top:37px">Render</div><div class="t" style="left:154px;top:37px">Window</div><div class="t" style="left:209px;top:37px">Help</div>
<div class="t w" style="left:266px;top:40px">Layout</div><div class="t n" style="left:319px;top:40px">Modeling</div><div class="t n" style="left:384px;top:40px">Sculpting</div><div class="t n" style="left:451px;top:40px">UV Editing</div><div class="t n" style="left:522px;top:40px">Texture Paint</div><div class="t n" style="left:608px;top:40px">Shading</div><div class="t n" style="left:667px;top:40px">Animation</div><div class="t n" style="left:739px;top:40px">Rendering</div><div class="t n" style="left:808px;top:40px">Compositing</div><div class="t n" style="left:890px;top:40px">Scripting</div>
<div class="t" style="left:1486px;top:37px">Scene</div><div class="t" style="left:1683px;top:37px">View Layer</div>
<!-- viewport headers -->
<div class="t" style="left:75px;top:64px">Object Mode</div><div class="t" style="left:170px;top:64px">View</div><div class="t" style="left:210px;top:64px">Select</div><div class="t" style="left:256px;top:64px">Add</div><div class="t" style="left:291px;top:64px">Object</div><div class="t" style="left:373px;top:64px">Global</div>
<div class="t" style="left:75px;top:486px">Object Mode</div><div class="t" style="left:170px;top:486px">View</div><div class="t" style="left:210px;top:486px">Select</div><div class="t" style="left:256px;top:486px">Add</div><div class="t" style="left:291px;top:486px">Object</div><div class="t" style="left:373px;top:486px">Global</div>
<div class="t" style="left:844px;top:64px">Object Mode</div><div class="t" style="left:939px;top:64px">View</div><div class="t" style="left:979px;top:64px">Select</div><div class="t" style="left:1025px;top:64px">Add</div><div class="t" style="left:1060px;top:64px">Object</div><div class="t" style="left:1142px;top:64px">Global</div>
<!-- outliner -->
<div class="t" style="left:1597px;top:89px">Scene Collection</div>
<div class="t d" style="left:1636px;top:109px">Collection</div><div class="t d" style="left:1636px;top:129px">Collection 2</div><div class="t d" style="left:1656px;top:149px">Widgets</div><div class="t d" style="left:1656px;top:169px">WGTS_rig</div>
<div class="t" style="left:1753px;top:172px;font-size:8px;color:#ddd">+99</div>
<div class="t" style="left:1636px;top:189px">Armature</div><div class="t" style="left:1656px;top:209px">Animation</div><div class="t" style="left:1656px;top:229px">Pose</div><div class="t" style="left:1656px;top:249px">Bone Groups</div><div class="t" style="left:1656px;top:269px">rig</div><div class="t" style="left:1656px;top:289px">SK_Mannequin.001</div>
<div class="t d" style="left:1636px;top:309px">metarig</div><div class="t" style="left:1616px;top:329px">Cylinder</div><div class="t" style="left:1616px;top:349px">Plane</div>
<!-- image editor -->
<div class="t" style="left:1621px;top:385px">View</div><div class="t" style="left:1675px;top:385px">View</div><div class="t" style="left:1715px;top:385px">Image</div><div class="t" style="left:1809px;top:385px">18182</div>
<!-- properties -->
<div class="t" style="left:1628px;top:639px">Cylinder</div><div class="t" style="left:1724px;top:639px">Cylinder</div><div class="t" style="left:1625px;top:670px;font-size:11px">Cylinder</div>
<div class="t o h" style="left:1602px;top:701px">Vertex Groups</div><div class="t o h" style="left:1602px;top:821px">Shape Keys</div><div class="t o h" style="left:1602px;top:941px">UV Maps</div><div class="t o h" style="left:1602px;top:965px">Vertex Colors</div><div class="t o h" style="left:1602px;top:989px">Face Maps</div><div class="t o h" style="left:1602px;top:1013px">Normals</div><div class="t o h" style="left:1602px;top:1036px">Texture Space</div>
<!-- timeline -->
<div class="t" style="left:56px;top:935px">Playback</div><div class="t" style="left:124px;top:935px">Keying</div><div class="t" style="left:183px;top:935px">View</div><div class="t" style="left:223px;top:935px">Marker</div>
<div class="t o" style="left:22px;top:980px">Summary</div>
<div class="t w" style="left:1291px;top:935px">2</div><div class="t w" style="left:1374px;top:935px">Start</div><div class="t w" style="left:1426px;top:935px">1</div><div class="t w" style="left:1462px;top:935px">End</div><div class="t w" style="left:1496px;top:935px">120</div>
<div class="t n" style="left:503px;top:959px">-2</div><div class="t n" style="left:600px;top:959px">-1</div><div class="t n" style="left:698px;top:959px">0</div><div class="t n" style="left:795px;top:959px">1</div><div class="t" style="left:892px;top:959px;color:#fff">2</div><div class="t n" style="left:989px;top:959px">3</div><div class="t n" style="left:1086px;top:959px">4</div><div class="t n" style="left:1182px;top:959px">5</div><div class="t n" style="left:1280px;top:959px">6</div><div class="t n" style="left:1376px;top:959px">7</div><div class="t n" style="left:1473px;top:959px">8</div>
<div class="t" style="left:807px;top:1012px;color:#f0f0f0">F_01</div><div class="t n" style="left:905px;top:1012px">F_02</div><div class="t n" style="left:1002px;top:1022px">F_03</div><div class="t n" style="left:1099px;top:1022px">F_04</div><div class="t n" style="left:1196px;top:1022px">F_05</div><div class="t n" style="left:1293px;top:1022px">F_06</div><div class="t n" style="left:1390px;top:1022px">F_07</div><div class="t n" style="left:1486px;top:1022px">F_08</div>
</body></html>
